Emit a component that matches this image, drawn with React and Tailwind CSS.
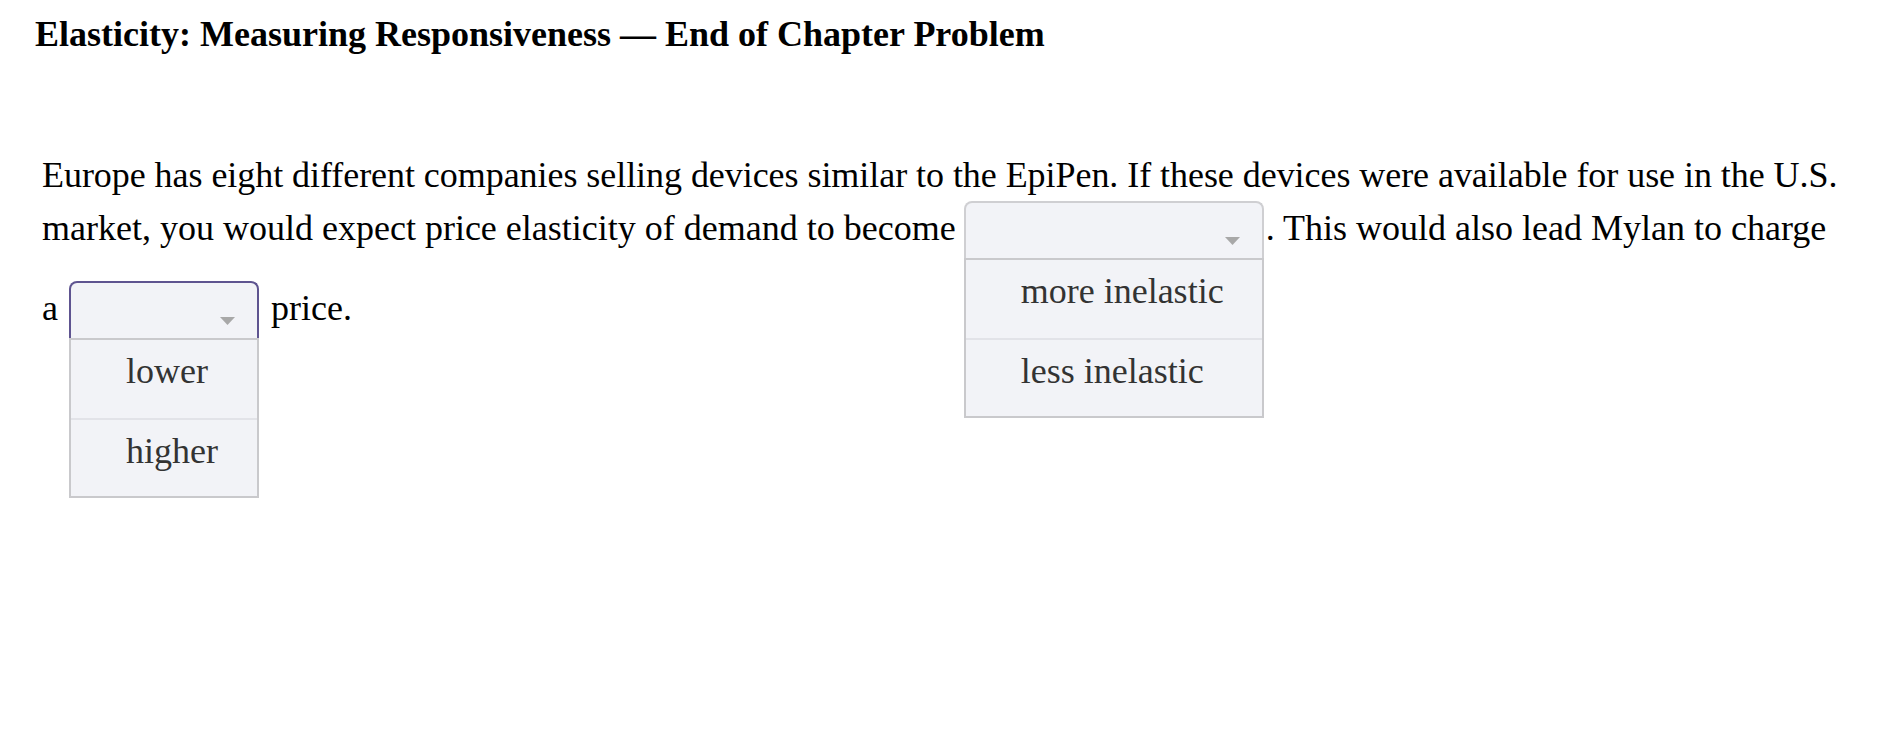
import React from 'react'

function Arrow() {
  return (
    <svg className="absolute right-[22px] top-[34px]" width="15" height="8" viewBox="0 0 15 8">
      <path d="M0 0 L15 0 L7.5 8 Z" fill="#a8a8a8" />
    </svg>
  )
}

function Dropdown({ width, focused, options, className }) {
  return (
    <span className={'relative inline-block align-baseline ' + className} style={{ width }}>
      <span
        className={
          'relative block h-[57px] rounded-t-[8px] border-2 border-b-0 bg-[#f2f3f7] pt-[7px] leading-[36px] ' +
          (focused ? 'border-[#5e5490]' : 'border-[#cfcfd2]')
        }
      >
        &#8203;
        <Arrow />
      </span>
      <div className="absolute left-0 top-[57px] z-10 w-full border-2 border-[#c9c9cc] bg-[#f2f3f7] text-[#333333]">
        {options.map((o, i) => (
          <div
            key={o}
            className={'h-[78px] pl-[55px] pt-[13px] leading-[36px] ' + (i > 0 ? 'border-t-2 border-[#e2e3e8]' : '')}
          >
            {o}
          </div>
        ))}
      </div>
    </span>
  )
}

export default function App() {
  return (
    <div className="min-h-screen bg-white font-['Liberation_Serif','Times_New_Roman',serif] text-black">
      <h1 className="pl-[35px] pt-[16px] text-[36px] font-bold leading-[36px]">
        Elasticity: Measuring Responsiveness — End of Chapter Problem
      </h1>

      <div className="pl-[42px] text-[36px]">
        <div className="mt-[105px] h-[36px] leading-[36px] whitespace-nowrap tracking-[-0.05px]">
          Europe has eight different companies selling devices similar to the EpiPen. If these devices were available for use in the U.S.
        </div>
        <div className="mt-[8px] flex items-baseline leading-[36px] whitespace-nowrap">
          <span>market, you would expect price elasticity of demand to become</span>
          <Dropdown width={300} className="mx-[8px]" options={['more inelastic', 'less inelastic']} />
          <span className="-ml-[6px]">. This would also lead Mylan to charge</span>
        </div>
        <div className="mt-[23px] flex items-baseline leading-[36px] whitespace-nowrap">
          <span>a</span>
          <Dropdown width={190} focused className="ml-[11px]" options={['lower', 'higher']} />
          <span className="ml-[12px]">price.</span>
        </div>
      </div>
    </div>
  )
}
